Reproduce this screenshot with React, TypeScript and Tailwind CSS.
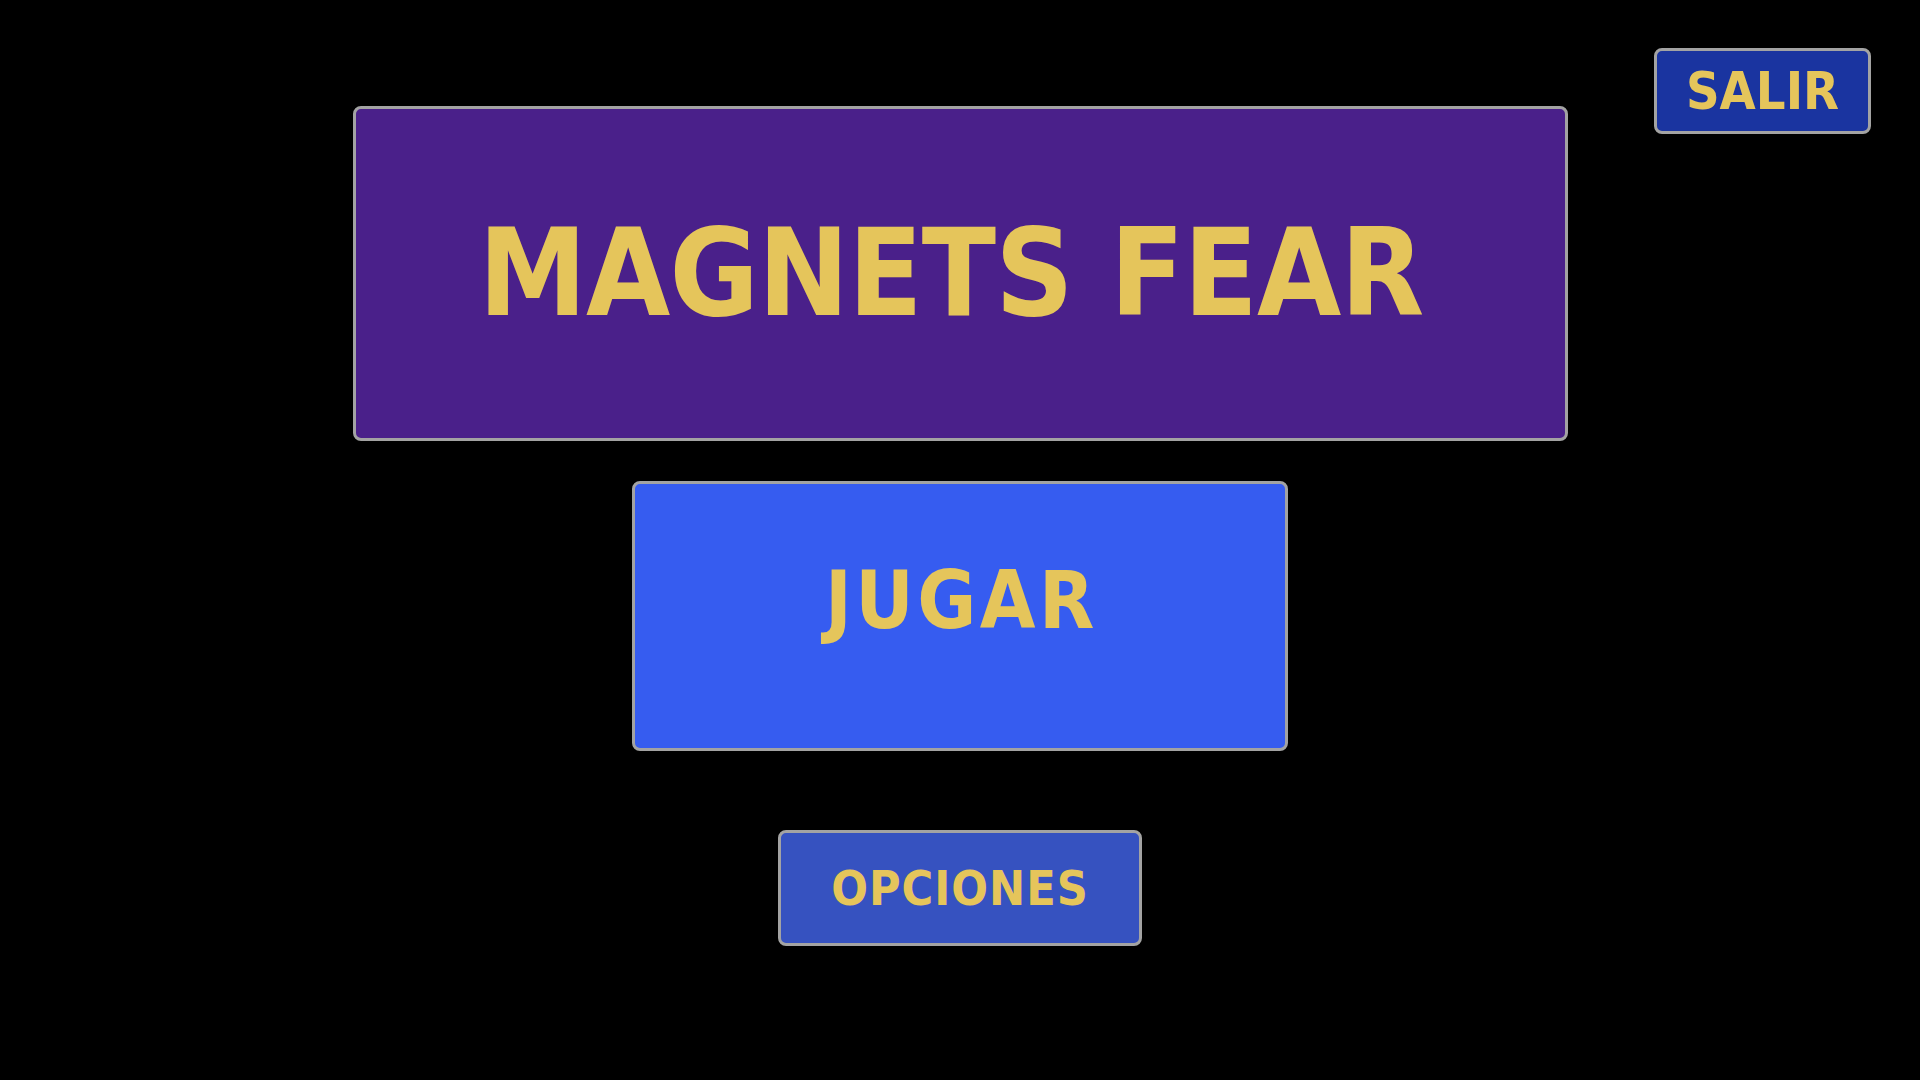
export default function App() {
  const font = { fontFamily: '"DejaVu Sans Condensed", "DejaVu Sans", Verdana, sans-serif' };

  return (
    <div className="relative min-h-screen w-full bg-black" style={font}>
      {/* Exit button, top right corner */}
      <button className="absolute top-[48px] right-[49px] flex h-[86px] w-[217px] items-center justify-center rounded-[8px] border-[3px] border-[#a3a3a3] bg-[#1a34a0] text-[52px] font-bold leading-none text-[#e5c55b]">
        SALIR
      </button>

      <div className="flex flex-col items-center pt-[106px]">
        {/* Title */}
        <div className="flex h-[335px] w-[1215px] items-center justify-center rounded-[8px] border-[3px] border-[#a3a3a3] bg-[#4a208a] pr-[18px]">
          <h1 className="text-[121px] font-bold leading-none tracking-[-0.8px] text-[#e5c55b]">MAGNETS FEAR</h1>
        </div>

        {/* Play */}
        <button className="mt-[40px] flex h-[270px] w-[656px] items-center justify-center rounded-[8px] border-[3px] border-[#a3a3a3] bg-[#365cf0] pb-[30px] pl-[3px] text-[80px] font-bold leading-none tracking-[3.5px] text-[#e5c55b]">
          JUGAR
        </button>

        {/* Options */}
        <button className="mt-[79px] flex h-[116px] w-[364px] items-center justify-center rounded-[8px] border-[3px] border-[#a3a3a3] bg-[#3652c0] text-[48px] font-bold leading-none tracking-[1px] text-[#e5c55b]">
          OPCIONES
        </button>
      </div>
    </div>
  );
}
